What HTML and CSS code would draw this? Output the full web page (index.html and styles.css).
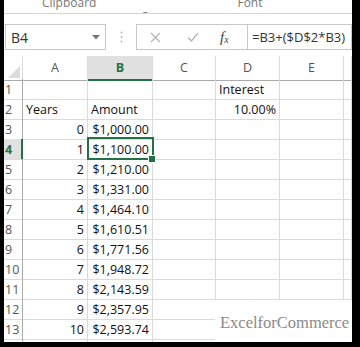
FILE: index.html
```html
<!DOCTYPE html>
<html lang="en">
<head>
  <meta charset="UTF-8">
  <title>Compound interest sheet</title>
  <link rel="stylesheet" href="styles.css">
</head>
<body>
  <div class="window">

    <!-- Ribbon group labels (cut off at the top) -->
    <div class="ribbon">
      <span class="group-label clip">Clipboard</span>
      <span class="launcher">
        <svg width="7" height="7" viewBox="0 0 7 7"><path d="M0.5 0.5h4M0.5 0.5v4M2 2l4 4M6 3.5v2.5h-2.5" fill="none" stroke="#888" stroke-width="1"/></svg>
      </span>
      <span class="group-label font">Font</span>
    </div>

    <!-- Name box + formula bar -->
    <div class="formula-bar">
      <div class="name-box">
        <span>B4</span>
        <svg width="8" height="5" viewBox="0 0 8 5"><path d="M0 0h8L4 4.5z" fill="#777"/></svg>
      </div>
      <div class="grip">
        <svg width="3" height="12" viewBox="0 0 3 12"><circle cx="1.5" cy="1.5" r="1" fill="#bbb"/><circle cx="1.5" cy="6" r="1" fill="#bbb"/><circle cx="1.5" cy="10.5" r="1" fill="#bbb"/></svg>
      </div>
      <div class="fx-buttons">
        <svg class="cancel" width="11" height="11" viewBox="0 0 11 11"><path d="M1 1l9 9M10 1l-9 9" stroke="#b5b5b5" stroke-width="1.3"/></svg>
        <svg class="enter" width="12" height="10" viewBox="0 0 12 10"><path d="M1 5.5l3.5 3.5L11 1" fill="none" stroke="#b5b5b5" stroke-width="1.3"/></svg>
        <i class="fx">f<sub>x</sub></i>
      </div>
      <div class="formula">=B3+($D$2*B3)</div>
    </div>

    <!-- Worksheet -->
    <div class="sheet">
      <div class="row head">
        <div class="corner"><svg width="12" height="12" viewBox="0 0 12 12"><path d="M12 0V12H0z" fill="#dcdcdc"/></svg></div>
        <div class="col">A</div>
        <div class="col active">B</div>
        <div class="col">C</div>
        <div class="col">D</div>
        <div class="col">E</div>
        <div class="col"></div>
      </div>
      <div class="row">
        <div class="rh">1</div><div></div><div></div><div></div><div class="txt">Interest</div><div></div><div></div>
      </div>
      <div class="row">
        <div class="rh">2</div><div class="txt">Years</div><div class="txt">Amount</div><div></div><div class="num">10.00%</div><div></div><div></div>
      </div>
      <div class="row">
        <div class="rh">3</div><div class="num">0</div><div class="num">$1,000.00</div><div></div><div></div><div></div><div></div>
      </div>
      <div class="row">
        <div class="rh active">4</div><div class="num">1</div><div class="num selected">$1,100.00</div><div></div><div></div><div></div><div></div>
      </div>
      <div class="row">
        <div class="rh">5</div><div class="num">2</div><div class="num">$1,210.00</div><div></div><div></div><div></div><div></div>
      </div>
      <div class="row">
        <div class="rh">6</div><div class="num">3</div><div class="num">$1,331.00</div><div></div><div></div><div></div><div></div>
      </div>
      <div class="row">
        <div class="rh">7</div><div class="num">4</div><div class="num">$1,464.10</div><div></div><div></div><div></div><div></div>
      </div>
      <div class="row">
        <div class="rh">8</div><div class="num">5</div><div class="num">$1,610.51</div><div></div><div></div><div></div><div></div>
      </div>
      <div class="row">
        <div class="rh">9</div><div class="num">6</div><div class="num">$1,771.56</div><div></div><div></div><div></div><div></div>
      </div>
      <div class="row">
        <div class="rh">10</div><div class="num">7</div><div class="num">$1,948.72</div><div></div><div></div><div></div><div></div>
      </div>
      <div class="row">
        <div class="rh">11</div><div class="num">8</div><div class="num">$2,143.59</div><div></div><div></div><div></div><div></div>
      </div>
      <div class="row">
        <div class="rh">12</div><div class="num">9</div><div class="num">$2,357.95</div><div></div><div></div><div></div><div></div>
      </div>
      <div class="row">
        <div class="rh">13</div><div class="num">10</div><div class="num">$2,593.74</div><div></div><div></div><div></div><div></div>
      </div>
      <div class="row">
        <div class="rh"></div><div></div><div></div><div></div><div></div><div></div><div></div>
      </div>

      <div class="watermark">ExcelforCommerce</div>
    </div>

  </div>
</body>
</html>
```

FILE: styles.css
```css
/* Base reset */
* {
  margin: 0;
  padding: 0;
  box-sizing: border-box;
}
body {
  background: #000;
  width: 360px;
  height: 347px;
  overflow: hidden;
  font-family: 'Open Sans', sans-serif;
  color: #222;
}

/* White window inside the black frame */
.window {
  margin-left: 4px;
  width: 348px;
  height: 342px;
  background: #fff;
  overflow: hidden;
}

/* Ribbon labels */
.ribbon {
  height: 14px;
  border-bottom: 1px solid #d5d5d5;
  display: flex;
  align-items: flex-start;
  overflow: hidden;
}
.group-label {
  font-size: 12px;
  line-height: 12px;
  color: #777;
  margin-top: -3px;
}
.clip {
  margin-left: 38px;
}
.launcher {
  margin-left: 47px;
  margin-top: 2px;
}
.font {
  margin-left: 87px;
}

/* Formula bar */
.formula-bar {
  height: 42px;
  padding-top: 10px;
  display: flex;
  align-items: flex-start;
}
.name-box {
  margin-left: 1px;
  width: 101px;
  height: 26px;
  border: 1px solid #c8c8c8;
  display: flex;
  align-items: center;
  justify-content: space-between;
  padding: 0 5px 0 5px;
  font-size: 14px;
  color: #333;
}
.grip {
  width: 30px;
  height: 26px;
  display: flex;
  align-items: center;
  justify-content: center;
}
.fx-buttons {
  width: 112px;
  height: 26px;
  border: 1px solid #c8c8c8;
  display: flex;
  align-items: center;
  padding-left: 13px;
}
.cancel {
  margin-right: 26px;
}
.enter {
  margin-right: 21px;
}
.fx {
  font-family: 'Liberation Serif', serif;
  font-size: 15px;
  color: #444;
}
.fx sub {
  font-size: 10px;
  vertical-align: -1px;
}
.formula {
  flex: 1;
  height: 26px;
  border: 1px solid #c8c8c8;
  border-left: none;
  padding-left: 4px;
  font-size: 13px;
  line-height: 24px;
  white-space: nowrap;
  overflow: hidden;
  color: #333;
}

/* Worksheet grid */
.sheet {
  position: relative;
  font-size: 12.5px;
}
.row {
  display: grid;
  grid-template-columns: 19px 65px 65px 63px 64px 64px 1fr;
  height: 20px;
}
.row > div {
  border-right: 1px solid #dadada;
  border-bottom: 1px solid #dadada;
  white-space: nowrap;
  line-height: 18px;
  padding: 2px 3px 0 3px;
  color: #111;
}
.row.head {
  height: 23px;
}
.row.head > div {
  border-bottom: 1px solid #ababab;
  text-align: center;
  line-height: 22px;
  color: #555;
  padding: 1px 0 0 0;
}
.row.head > .corner {
  display: flex;
  align-items: flex-end;
  justify-content: flex-end;
  padding: 0 2px 2px 0;
}
.row.head > .col.active {
  background: #e1e1e1;
  color: #217346;
  font-weight: 700;
  border-bottom: 2px solid #217346;
}
.row > .rh {
  padding-left: 1px;
  color: #555;
  border-right-color: #ababab;
}
.row > .rh.active {
  background: #e1e1e1;
  color: #217346;
  font-weight: 700;
  border-right: 2px solid #217346;
}
.row > .num {
  text-align: right;
}
.row > .selected {
  position: relative;
}
.row > .selected::after {
  content: "";
  position: absolute;
  top: -2px;
  left: -1px;
  right: -2px;
  bottom: -1px;
  border: 2px solid #217346;
}
.row > .selected::before {
  content: "";
  position: absolute;
  right: -4px;
  bottom: -4px;
  width: 6px;
  height: 6px;
  background: #217346;
  border: 1px solid #fff;
  z-index: 1;
}

/* Site watermark sitting over the grid */
.watermark {
  position: absolute;
  left: 211px;
  top: 244px;
  width: 140px;
  height: 60px;
  background: #fff;
  padding: 13px 0 0 5px;
  font-family: 'Liberation Serif', serif;
  font-size: 16.5px;
  color: #8a8a8a;
}
```
